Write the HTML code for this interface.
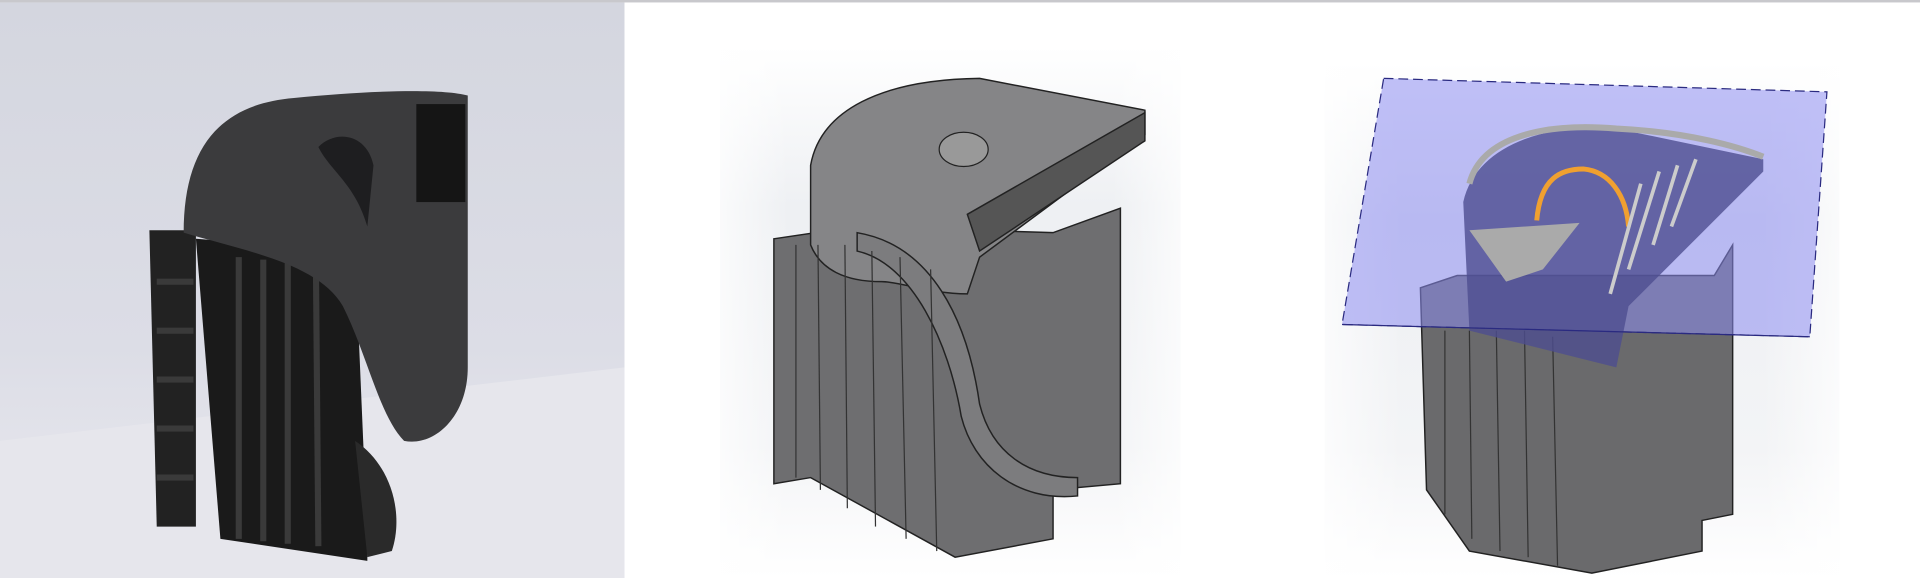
<!DOCTYPE html>
<html><head><meta charset="utf-8"><style>
html,body{margin:0;padding:0;background:#fff;width:1920px;height:578px;overflow:hidden}
svg{display:block}
</style></head><body>
<svg width="1920" height="578" viewBox="0 0 1568 472" preserveAspectRatio="none" xmlns="http://www.w3.org/2000/svg">
<defs>
<linearGradient id="lp" x1="0" y1="0" x2="0" y2="1">
<stop offset="0" stop-color="#d4d6df"/><stop offset="0.6" stop-color="#dcdde6"/><stop offset="1" stop-color="#ebebf0"/></linearGradient>
<linearGradient id="cad" x1="0" y1="0" x2="0" y2="1">
<stop offset="0" stop-color="#ffffff"/><stop offset="0.3" stop-color="#eef0f3"/><stop offset="0.75" stop-color="#f3f4f6"/><stop offset="1" stop-color="#ffffff"/></linearGradient>
<linearGradient id="cadx" x1="0" y1="0" x2="1" y2="0">
<stop offset="0" stop-color="#fff" stop-opacity="0.7"/><stop offset="0.15" stop-color="#fff" stop-opacity="0"/><stop offset="0.85" stop-color="#fff" stop-opacity="0"/><stop offset="1" stop-color="#fff" stop-opacity="0.7"/></linearGradient>
</defs>
<rect x="0" y="0" width="1568" height="2" fill="#c8c8cc"/>
<!-- left photo -->
<rect x="0" y="2" width="510" height="470" fill="url(#lp)"/>
<polygon points="0,360 510,300 510,472 0,472" fill="#e6e6ec"/>
<!-- photo object -->
<polygon points="122,188 160,188 160,430 128,430" fill="#222"/>
<polygon points="160,195 290,205 300,440 300,458 180,440" fill="#1a1a1a"/>
<g stroke="#3a3a3a" stroke-width="5">
<line x1="195" y1="210" x2="195" y2="440"/><line x1="215" y1="212" x2="215" y2="442"/><line x1="235" y1="214" x2="235" y2="444"/><line x1="258" y1="216" x2="260" y2="446"/>
<line x1="128" y1="230" x2="158" y2="230"/><line x1="128" y1="270" x2="158" y2="270"/><line x1="128" y1="310" x2="158" y2="310"/><line x1="128" y1="350" x2="158" y2="350"/><line x1="128" y1="390" x2="158" y2="390"/></g>
<path d="M150,190 C150,120 180,85 240,80 C300,74 360,72 382,78 L382,300 C382,340 355,365 330,360 C310,340 300,290 280,250 C260,215 200,205 150,190 Z" fill="#3b3b3d"/>
<path d="M260,120 C275,105 300,110 305,135 L300,185 C290,150 270,140 260,120 Z" fill="#1e1e20"/>
<rect x="340" y="85" width="40" height="80" fill="#151515"/>
<path d="M290,360 C320,380 330,420 320,450 L300,455 Z" fill="#2a2a2a"/>
<!-- middle CAD -->
<rect x="588" y="38" width="376" height="434" fill="url(#cad)"/>
<rect x="588" y="38" width="376" height="434" fill="url(#cadx)"/>
<g stroke="#222" stroke-width="1.2" fill="#6e6e70">
<polygon points="632,195 700,185 860,190 915,170 915,395 860,400 860,440 780,455 662,390 632,395"/>
<path d="M662,135 C670,90 720,65 800,64 L935,90 L935,110 L800,210 L790,240 C760,240 735,230 720,230 C690,230 670,220 662,200 Z" fill="#858587"/>
<polygon points="790,175 935,92 935,115 800,205" fill="#555"/>
<path d="M700,190 C760,200 790,260 800,330 C810,370 840,390 880,390 L880,405 C830,410 795,380 785,340 C775,280 745,215 700,205 Z" fill="#7c7c7e"/>
</g>
<g stroke="#333" stroke-width="1">
<line x1="650" y1="200" x2="650" y2="390"/><line x1="668" y1="200" x2="670" y2="400"/><line x1="690" y1="200" x2="692" y2="415"/><line x1="712" y1="205" x2="715" y2="430"/><line x1="735" y1="210" x2="740" y2="440"/><line x1="760" y1="220" x2="765" y2="450"/>
</g>
<ellipse cx="787" cy="122" rx="20" ry="14" fill="#999" stroke="#222"/>
<!-- right CAD -->
<rect x="1082" y="52" width="420" height="420" fill="url(#cad)"/>
<rect x="1082" y="52" width="420" height="420" fill="url(#cadx)"/>
<g stroke="#222" stroke-width="1.2" fill="#6a6a6c">
<polygon points="1160,235 1190,225 1400,225 1415,200 1415,420 1390,425 1390,450 1300,468 1200,450 1165,400"/>
</g>
<g stroke="#333" stroke-width="1">
<line x1="1180" y1="270" x2="1180" y2="420"/><line x1="1200" y1="270" x2="1202" y2="440"/><line x1="1222" y1="270" x2="1225" y2="450"/><line x1="1245" y1="270" x2="1248" y2="455"/><line x1="1268" y1="275" x2="1272" y2="462"/>
</g>
<polygon points="1130,64 1492,75 1478,275 1096,265" fill="#8c8cf0" fill-opacity="0.55" stroke="#2a2a80" stroke-width="1" stroke-dasharray="8,4"/>
<path d="M1195,165 C1205,120 1260,100 1320,105 L1440,130 L1440,140 L1330,250 L1320,300 L1200,270 Z" fill="#4d4d90" fill-opacity="0.8"/>
<path d="M1200,150 C1210,112 1260,100 1320,105 C1380,108 1420,120 1440,128" fill="none" stroke="#aaa" stroke-width="5"/>
<polygon points="1200,188 1290,182 1260,220 1230,230" fill="#aaaaaa"/>
<path d="M1255,180 C1258,145 1275,138 1293,138 C1315,140 1328,160 1330,185" fill="none" stroke="#f0a030" stroke-width="4"/>
<g stroke="#ccc" stroke-width="3" fill="none"><path d="M1340,150 L1315,240"/><path d="M1355,140 L1330,220"/><path d="M1370,135 L1350,200"/><path d="M1385,130 L1365,185"/></g>
<line x1="1096" y1="265" x2="1478" y2="275" stroke="#2a2a80"/>
</svg>
</body></html>
